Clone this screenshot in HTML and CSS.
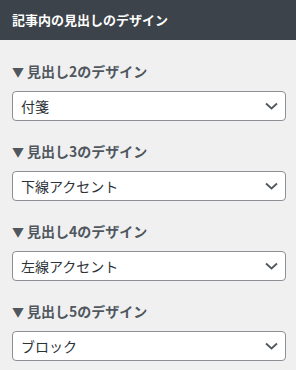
FILE: index.html
```html
<!DOCTYPE html>
<html lang="ja">
<head>
    <meta charset="UTF-8">
    <meta name="viewport" content="width=device-width, initial-scale=1.0">
    <title>記事内の見出しのデザイン</title>
    <link rel="stylesheet" href="styles.css">
</head>
<body>
    <div class="panel-header">
        <h2>記事内の見出しのデザイン</h2>
    </div>
    <div class="panel-body">
        <div class="field">
            <div class="field-label"><span class="arrow">▼</span>見出し2のデザイン</div>
            <div class="select">
                <span>付箋</span>
                <svg width="13" height="8" viewBox="0 0 13 8"><path d="M1 1.5 L6.5 6.5 L12 1.5" fill="none" stroke="#50575e" stroke-width="1.8"/></svg>
            </div>
        </div>
        <div class="field">
            <div class="field-label"><span class="arrow">▼</span>見出し3のデザイン</div>
            <div class="select">
                <span>下線アクセント</span>
                <svg width="13" height="8" viewBox="0 0 13 8"><path d="M1 1.5 L6.5 6.5 L12 1.5" fill="none" stroke="#50575e" stroke-width="1.8"/></svg>
            </div>
        </div>
        <div class="field">
            <div class="field-label"><span class="arrow">▼</span>見出し4のデザイン</div>
            <div class="select">
                <span>左線アクセント</span>
                <svg width="13" height="8" viewBox="0 0 13 8"><path d="M1 1.5 L6.5 6.5 L12 1.5" fill="none" stroke="#50575e" stroke-width="1.8"/></svg>
            </div>
        </div>
        <div class="field">
            <div class="field-label"><span class="arrow">▼</span>見出し5のデザイン</div>
            <div class="select">
                <span>ブロック</span>
                <svg width="13" height="8" viewBox="0 0 13 8"><path d="M1 1.5 L6.5 6.5 L12 1.5" fill="none" stroke="#50575e" stroke-width="1.8"/></svg>
            </div>
        </div>
    </div>
</body>
</html>
```

FILE: styles.css
```css
body {
    font-family: "Noto Sans CJK JP", "Noto Sans", sans-serif;
    background-color: #f0f0f1;
    margin: 0;
    padding: 0;
}
.panel-header {
    background-color: #3c434a;
    height: 40px;
    padding: 0 12px;
    display: flex;
    align-items: center;
}
.panel-header h2 {
    margin: 0;
    color: #fff;
    font-size: 13px;
    font-weight: 700;
    line-height: 20px;
}
.panel-body {
    padding: 1px 10px 0 12px;
}
.field {
    padding-top: 20px;
}
.field-label {
    display: flex;
    align-items: center;
    height: 20px;
    color: #50575e;
    font-size: 14px;
    font-weight: 700;
    margin-bottom: 10px;
}
.field-label .arrow {
    font-size: 12px;
    margin-right: 3px;
}
.select {
    box-sizing: border-box;
    height: 30px;
    background-color: #fff;
    border: 1px solid #8c8f94;
    border-radius: 4px;
    display: flex;
    align-items: center;
    justify-content: space-between;
    padding: 0 7px 1px 8px;
    color: #2c3338;
    font-size: 14px;
}
.select svg {
    display: block;
}
```
